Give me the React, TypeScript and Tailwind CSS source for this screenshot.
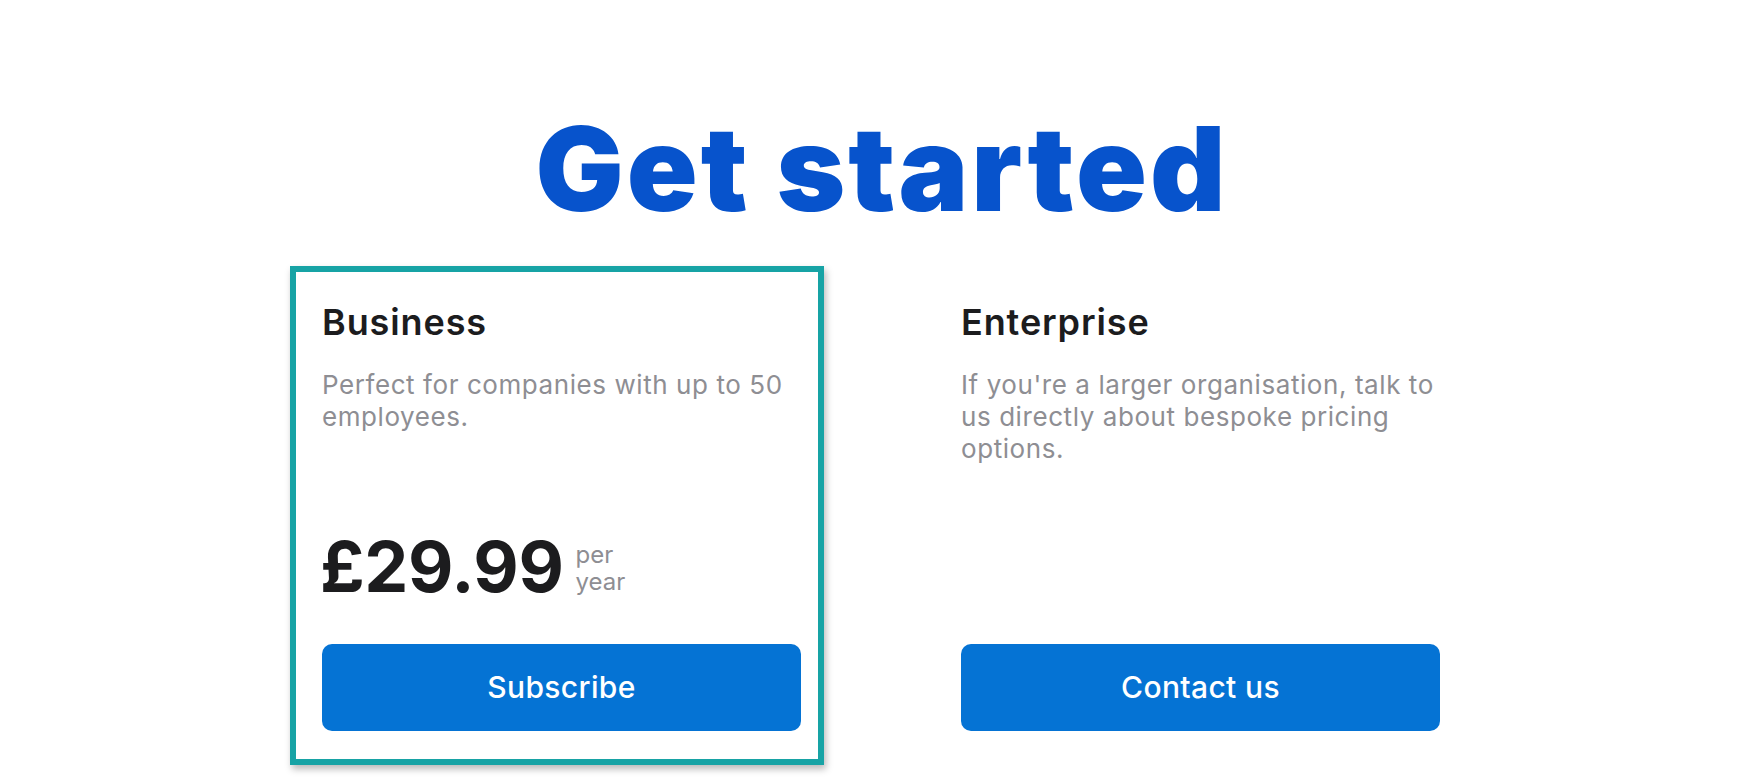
import React from "react";

interface Plan {
  id: string;
  name: string;
  description: string;
  price?: string;
  period?: string;
  cta: string;
  selected?: boolean;
}

const plans: Plan[] = [
  {
    id: "business",
    name: "Business",
    description: "Perfect for companies with up to 50 employees.",
    price: "£29.99",
    period: "per year",
    cta: "Subscribe",
    selected: true,
  },
  {
    id: "enterprise",
    name: "Enterprise",
    description:
      "If you're a larger organisation, talk to us directly about bespoke pricing options.",
    cta: "Contact us",
  },
];

const PlanCard: React.FC<{ plan: Plan }> = ({ plan }) => {
  const [per, unit] = (plan.period ?? "").split(" ");

  return (
    <div
      className={
        "flex flex-col border-[6px] pt-[28px] pb-[28px] pl-[26px] pr-[17px] " +
        (plan.selected
          ? "border-[#17a3a5] shadow-[2px_4px_7px_rgba(0,0,0,0.28)]"
          : "border-transparent")
      }
    >
      <h2 className="text-[36px] leading-[44px] font-semibold text-[#1c1c1e] tracking-[0.025em]">
        {plan.name}
      </h2>
      <p className="mt-[25px] text-[26px] leading-[32px] text-[#8e8e93] tracking-[0.022em]">
        {plan.description}
      </p>

      {plan.price && (
        <div className="mt-[99px] flex">
          <span className="-ml-[2px] text-[70px] leading-[70px] font-bold text-[#1c1c1e] tracking-[-0.005em]">
            {plan.price}
          </span>
          <span className="ml-[12px] mb-[7px] self-end text-[24px] leading-[27px] text-[#8e8e93]">
            {per}
            <br />
            {unit}
          </span>
        </div>
      )}

      <button
        className={
          "h-[87px] w-full rounded-[10px] bg-[#0573d4] text-[30px] font-medium text-white tracking-[0.012em] " +
          (plan.price ? "mt-[42px]" : "mt-auto")
        }
      >
        {plan.cta}
      </button>
    </div>
  );
};

export default function App() {
  return (
    <div
      className="min-h-screen bg-white pt-[110px]"
      style={{ fontFamily: "Inter, 'Noto Sans', sans-serif" }}
    >
      <h1 className="text-center text-[117px] leading-[117px] font-black tracking-[0.025em] text-[#0753cc]">
        Get started
      </h1>

      <div className="mx-auto mt-[39px] w-[1184px]">
        <div className="grid grid-cols-[534px_534px] gap-[105px]">
          {plans.map((plan) => (
            <PlanCard key={plan.id} plan={plan} />
          ))}
        </div>
      </div>
    </div>
  );
}
